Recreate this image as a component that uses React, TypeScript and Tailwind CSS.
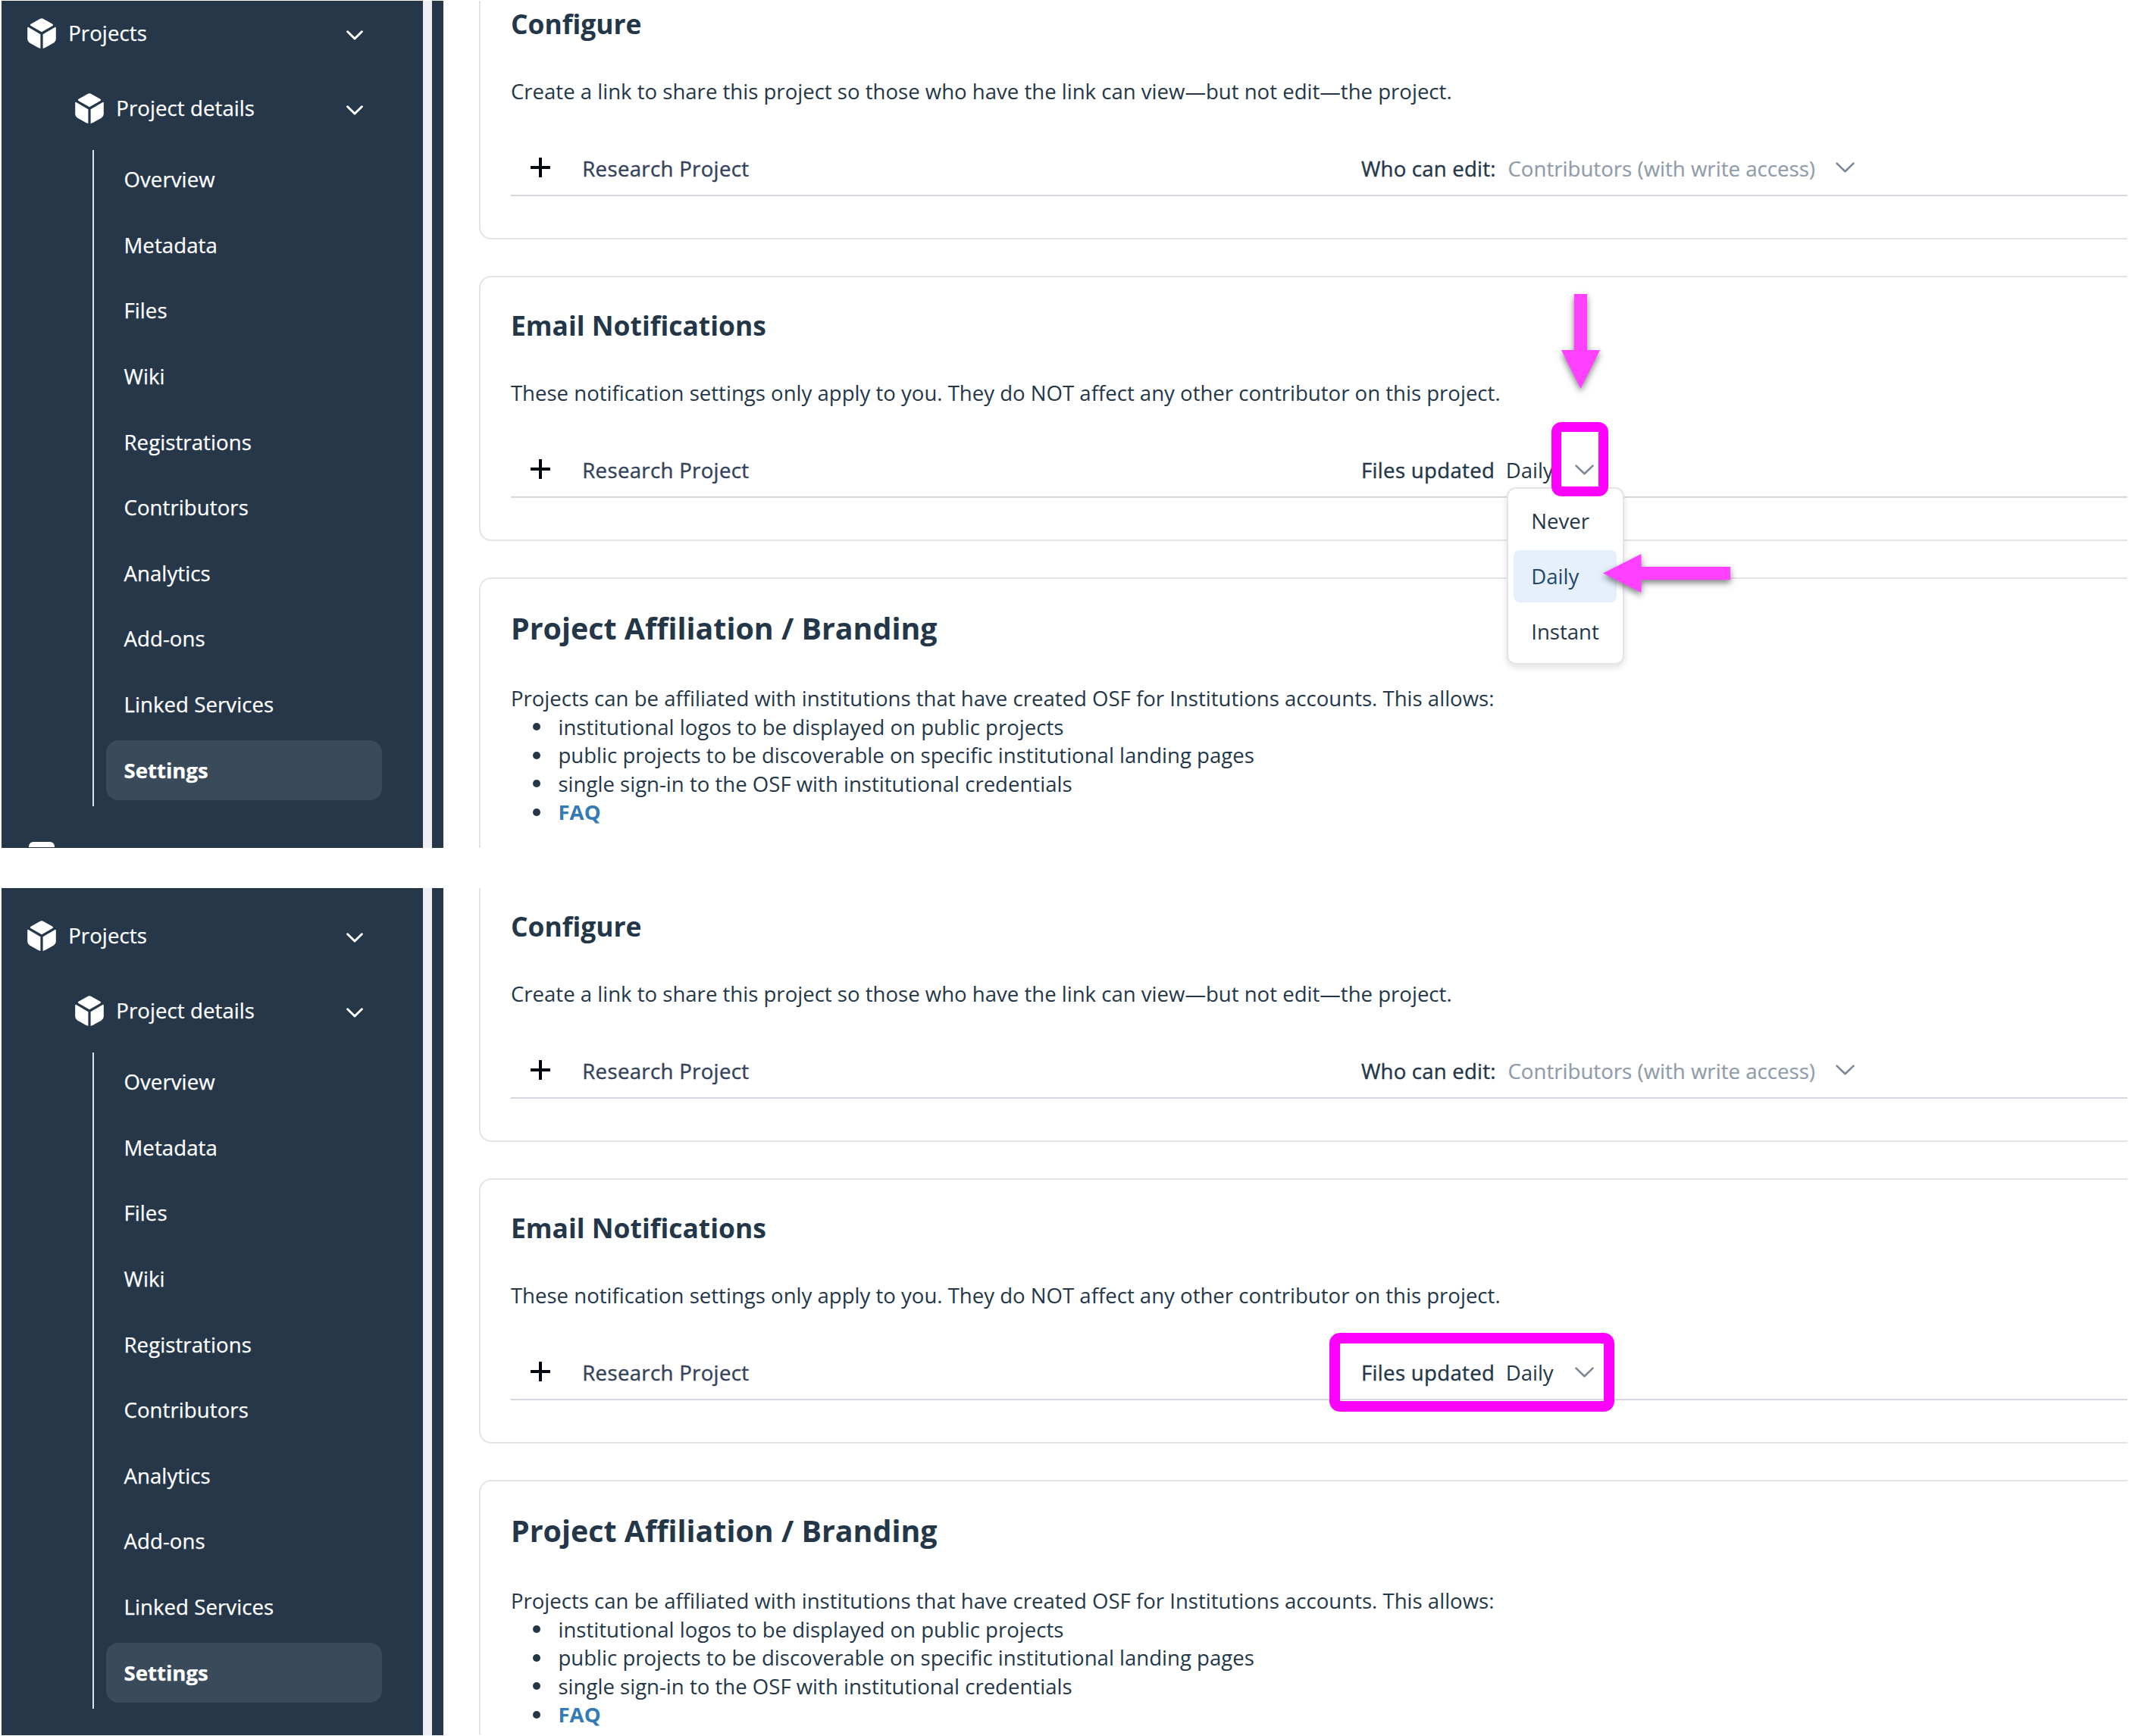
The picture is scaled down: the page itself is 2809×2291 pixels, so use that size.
import type { ReactNode } from "react";

const navItems = [
  "Overview",
  "Metadata",
  "Files",
  "Wiki",
  "Registrations",
  "Contributors",
  "Analytics",
  "Add-ons",
  "Linked Services",
  "Settings",
];

const benefits = [
  "institutional logos to be displayed on public projects",
  "public projects to be discoverable on specific institutional landing pages",
  "single sign-in to the OSF with institutional credentials",
];

function CubeIcon() {
  return (
    <svg className="h-[40px] w-[38px] shrink-0" viewBox="0 0 38 40" fill="white">
      <path d="M16.6 1Q19 -0.4 21.4 1L33 7.4Q35.4 8.8 33 10.2L19 18.2L5 10.2Q2.6 8.8 5 7.4Z" />
      <path d="M1.6 11.9L17.4 21.2V40Q16 39.8 14.6 39.1L3 32.4Q0.2 30.8 0.2 27.6V12.8Q0.3 11.3 1.6 11.9Z" />
      <path d="M36.4 11.9L20.6 21.2V40Q22 39.8 23.4 39.1L35 32.4Q37.8 30.8 37.8 27.6V12.8Q37.7 11.3 36.4 11.9Z" />
    </svg>
  );
}

function NavChevron() {
  return (
    <svg className="mt-[5px] h-[13px] w-[22px]" viewBox="0 0 22 13" fill="none">
      <path d="M1.6 1.8L11 11L20.4 1.8" stroke="white" strokeWidth="3" strokeLinecap="round" strokeLinejoin="round" />
    </svg>
  );
}

function SelectChevron() {
  return (
    <svg className="-mt-[2px] h-[14px] w-[25px] shrink-0" viewBox="0 0 25 14" fill="none">
      <path d="M1.5 1.6L12.5 12.2L23.5 1.6" stroke="#7c8898" strokeWidth="2.6" strokeLinecap="round" strokeLinejoin="round" />
    </svg>
  );
}

function PlusIcon() {
  return (
    <svg className="-mt-[3px] h-[26px] w-[26px] shrink-0" viewBox="0 0 26 26" fill="none">
      <path d="M13 1V25M1 13H25" stroke="#03060f" strokeWidth="4" strokeLinecap="round" />
    </svg>
  );
}

function Sidebar() {
  return (
    <nav className="h-full w-[555.5px] shrink-0 bg-[#253749] pt-[23.3px] tracking-[0.08px] text-white [-webkit-text-stroke:0.25px_white]">
      <div className="flex h-[40px] items-center pr-[78.5px] pl-[34.2px]">
        <CubeIcon />
        <span className="ml-[16px] -mt-[1px]">Projects</span>
        <span className="ml-auto">
          <NavChevron />
        </span>
      </div>
      <div className="mt-[58.4px] flex h-[40px] items-center pr-[78.5px] pl-[97.3px]">
        <CubeIcon />
        <span className="ml-[16px]">Project details</span>
        <span className="ml-auto">
          <NavChevron />
        </span>
      </div>
      <ul className="mt-[35px] ml-[119.7px] w-[382px] border-l-2 border-[#dfe3e7] pl-[16px]">
        {navItems.map((item) => (
          <li key={item} className="h-[86.63px]">
            <div
              className={
                item === "Settings"
                  ? "flex h-[78.75px] items-center rounded-[16px] bg-[#394a5b] pb-[1px] pl-[23.8px] font-bold tracking-normal"
                  : "flex h-[78.75px] items-center pb-[1px] pl-[23.8px]"
              }
            >
              {item}
            </div>
          </li>
        ))}
      </ul>
      <div className="mt-[47px] ml-[36px] h-[40px] w-[34px] rounded-[6px] border-t-[7px] border-white" />
    </nav>
  );
}

function SettingsCard({ title, description, children }: { title: string; description: string; children: ReactNode }) {
  return (
    <section className="h-[350.7px] shrink-0 rounded-l-[16px] border-2 border-r-0 border-[#e3e4e5] pt-[39.4px] pl-[39.9px]">
      <h2 className="h-[48px] text-[35.45px] leading-[48px] font-bold">{title}</h2>
      <p className="mt-[47.4px] h-[37px]">{description}</p>
      <div className="mt-[64.8px] flex h-[55px] items-center border-b-2 border-[#d5d9df] pb-[16px] pl-[26.2px]">
        <PlusIcon />
        <span className="ml-[42.2px] w-[1027.7px] shrink-0 tracking-[0.33px] text-[#34435a] [-webkit-text-stroke:0.4px_#34435a]">
          Research Project
        </span>
        {children}
      </div>
    </section>
  );
}

function Main() {
  return (
    <main className="flex flex-1 flex-col gap-[47.5px] pl-[47px] text-[#233749]">
      <SettingsCard
        title="Configure"
        description="Create a link to share this project so those who have the link can view—but not edit—the project."
      >
        <span className="w-[193.5px] tracking-[0.2px] [-webkit-text-stroke:0.4px_#263849]">Who can edit:</span>
        <span className="mr-[26.5px] tracking-[0.03px] text-[#909cab] [-webkit-text-stroke:0.2px_#909cab]">
          Contributors (with write access)
        </span>
        <SelectChevron />
      </SettingsCard>
      <SettingsCard
        title="Email Notifications"
        description="These notification settings only apply to you. They do NOT affect any other contributor on this project."
      >
        <span className="w-[190.7px] tracking-[0.33px] [-webkit-text-stroke:0.4px_#263849]">Files updated</span>
        <span className="w-[91.3px]">Daily</span>
        <SelectChevron />
      </SettingsCard>
      <section className="h-[600px] shrink-0 rounded-l-[16px] border-2 border-r-0 border-[#e3e4e5] pt-[38.7px] pl-[39.9px]">
        <h2 className="h-[54px] text-[39.4px] leading-[54px] font-bold">Project Affiliation / Branding</h2>
        <p className="mt-[46.9px] h-[37.5px]">
          Projects can be affiliated with institutions that have created OSF for Institutions accounts. This allows:
        </p>
        <ul className="leading-[37.4px]">
          {benefits.map((benefit) => (
            <li key={benefit} className="flex">
              <span className="mt-[13.5px] mr-[23.6px] ml-[29px] h-[10px] w-[10px] rounded-full bg-[#233749]" />
              {benefit}
            </li>
          ))}
          <li className="flex">
            <span className="mt-[13.5px] mr-[23.6px] ml-[29px] h-[10px] w-[10px] rounded-full bg-[#233749]" />
            <a className="font-bold text-[#337ab7]">FAQ</a>
          </li>
        </ul>
      </section>
    </main>
  );
}

function FrequencyMenu() {
  return (
    <div className="absolute top-[642.3px] left-[1988px] flex h-[233.5px] w-[154.5px] flex-col gap-[3.7px] rounded-[12px] border-2 border-[#e3e5e8] bg-white px-[7.2px] pt-[7.6px] text-[#233749] shadow-[0_4px_9px_rgba(0,0,0,0.12)]">
      <div className="flex h-[69.3px] items-center pl-[23px]">Never</div>
      <div className="flex h-[69.3px] items-center rounded-[8px] bg-[#e5f0fc] pl-[23px] text-[#22486e]">Daily</div>
      <div className="flex h-[69.3px] items-center pl-[23px]">Instant</div>
    </div>
  );
}

function DownArrow() {
  return (
    <svg
      className="absolute top-[386.5px] left-[2060px] h-[125px] w-[51px] overflow-visible drop-shadow-[0_4px_4px_rgba(0,0,0,0.5)]"
      viewBox="0 0 51 125"
      fill="#ff40ff"
    >
      <path d="M16.8 0H34V74H51L25.5 125L0 74H16.8Z" />
    </svg>
  );
}

function LeftArrow() {
  return (
    <svg
      className="absolute top-[730.2px] left-[2115.2px] h-[51px] w-[168px] overflow-visible drop-shadow-[0_4px_4px_rgba(0,0,0,0.5)]"
      viewBox="0 0 168 51"
      fill="#ff40ff"
    >
      <path d="M0 25.5L50.5 0V17H168V34.3H50.5V51Z" />
    </svg>
  );
}

function Panel({ offset, children }: { offset: string; children: ReactNode }) {
  return (
    <div className="relative flex h-[1118px] overflow-hidden pr-[2px] pl-[2px]">
      <div className="flex h-full shrink-0 bg-[#253749]">
        <div className={offset}>
          <Sidebar />
        </div>
      </div>
      <div className="h-full w-[12px] shrink-0 bg-[#eeeff2]" />
      <div className="h-full w-[15.5px] shrink-0 bg-[#253749]" />
      <div className="-mt-[35.6px] flex h-[1400px] flex-1">
        <div className={`${offset} flex flex-1`}>
          <Main />
        </div>
      </div>
      {children}
    </div>
  );
}

export default function App() {
  return (
    <div className="h-[2291px] w-[2809px] overflow-hidden bg-white pt-px font-['Open_Sans',sans-serif] text-[27.57px] leading-[37px] whitespace-nowrap">
      <Panel offset="pt-0">
        <FrequencyMenu />
        <div className="absolute top-[556.3px] left-[2047px] h-[98px] w-[74.5px] rounded-[13px] border-[13.6px] border-[#ff00ff]" />
        <DownArrow />
        <LeftArrow />
      </Panel>
      <div className="h-[53px]" />
      <Panel offset="pt-[20px]">
        <div className="absolute top-[587px] left-[1754px] h-[104.3px] w-[375.7px] rounded-[14px] border-[14px] border-[#ff00ff]" />
      </Panel>
    </div>
  );
}
